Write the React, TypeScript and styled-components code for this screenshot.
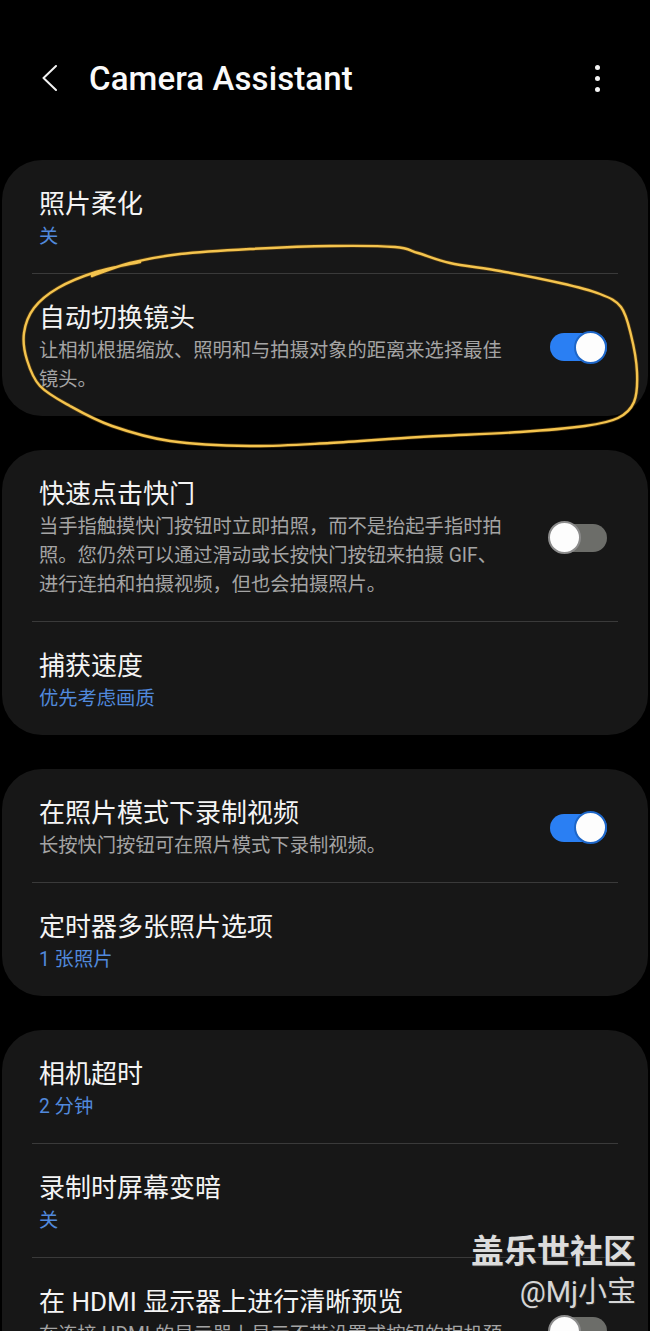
import React from "react";
import styled, { createGlobalStyle } from "styled-components";

const Global = createGlobalStyle`
  html, body { margin: 0; padding: 0; background: #000; }
  body { width: 650px; height: 1331px; overflow: hidden; }
  * { box-sizing: border-box; }
`;

const Page = styled.div`
  position: relative;
  width: 650px;
  height: 1331px;
  overflow: hidden;
  background: #000;
  font-family: Roboto, "Noto Sans CJK SC", sans-serif;
  color: #f2f2f2;
`;

const Header = styled.header`
  display: flex;
  align-items: center;
  height: 56px;
  margin: 50px 0 54px;
  padding: 0 50px 0 42px;
`;

const Back = styled.svg`
  flex: none;
  width: 15px;
  height: 26px;
`;

const Title = styled.h1`
  margin: 0 0 0 32px;
  font-family: Roboto, sans-serif;
  font-weight: 500;
  font-size: 33px;
  letter-spacing: 0.1px;
  color: #fafafa;
`;

const Kebab = styled.div`
  margin-left: auto;
  display: flex;
  flex-direction: column;
  gap: 6px;
`;

const Dot = styled.span`
  width: 5px;
  height: 5px;
  border-radius: 50%;
  background: #f5f5f5;
`;

const List = styled.main`
  display: flex;
  flex-direction: column;
  gap: 34px;
  padding: 0 2px;
`;

const Card = styled.section`
  background: #171717;
  border-radius: 40px;
  overflow: hidden;
`;

const Divider = styled.div`
  height: 1px;
  margin: 0 30px;
  background: #3a3a3a;
`;

const Row = styled.div`
  display: flex;
  align-items: center;
  padding: 26px 41px 22px 37px;
`;

const Texts = styled.div`
  flex: 1;
  max-width: 472px;
  min-width: 0;
`;

const RowTitle = styled.div`
  font-size: 26px;
  line-height: 36px;
  font-weight: 400;
  color: #f4f4f4;
`;

const Desc = styled.div`
  font-size: 19.3px;
  line-height: 29px;
  color: #a4a4a4;
`;

const Value = styled.div`
  font-size: 19.3px;
  line-height: 29px;
  color: #5189dc;
`;

const Track = styled.span<{ $on: boolean }>`
  position: relative;
  flex: none;
  margin-left: auto;
  width: 57px;
  height: 28px;
  border-radius: 14px;
  background: ${(p) => (p.$on ? "#2a7ff3" : "#6c6d69")};
`;

const Thumb = styled.span<{ $on: boolean }>`
  position: absolute;
  top: -2.5px;
  ${(p) => (p.$on ? "right: 0;" : "left: -2px;")}
  width: 33px;
  height: 33px;
  border-radius: 50%;
  background: #fdfdfd;
  border: 2px solid ${(p) => (p.$on ? "#1d66c8" : "#8c8c8c")};
`;

const Overlay = styled.svg`
  position: absolute;
  left: 0;
  top: 0;
  width: 650px;
  height: 1331px;
  pointer-events: none;
`;

const Watermark = styled.div`
  position: absolute;
  right: 14px;
  top: 1226px;
  display: flex;
  flex-direction: column;
  align-items: flex-end;
  font-family: "Noto Sans CJK SC", sans-serif;
  color: #dcdcdc;
  text-shadow: 0 0 2px #222, 1px 1px 1px #333;
  pointer-events: none;
`;

const WmBig = styled.div`
  font-size: 33px;
  font-weight: 700;
  line-height: 46px;
  letter-spacing: 0px;
`;

const WmSmall = styled.div`
  font-family: Roboto, "Noto Sans CJK SC", sans-serif;
  font-size: 29px;
  line-height: 40px;
  font-weight: 400;
  color: #d6d6d6;
`;

type Item = {
  title: string;
  desc?: string;
  value?: string;
  toggle?: boolean;
};

const cards: Item[][] = [
  [
    { title: "照片柔化", value: "关" },
    {
      title: "自动切换镜头",
      desc: "让相机根据缩放、照明和与拍摄对象的距离来选择最佳镜头。",
      toggle: true,
    },
  ],
  [
    {
      title: "快速点击快门",
      desc: "当手指触摸快门按钮时立即拍照，而不是抬起手指时拍照。您仍然可以通过滑动或长按快门按钮来拍摄 GIF、进行连拍和拍摄视频，但也会拍摄照片。",
      toggle: false,
    },
    { title: "捕获速度", value: "优先考虑画质" },
  ],
  [
    {
      title: "在照片模式下录制视频",
      desc: "长按快门按钮可在照片模式下录制视频。",
      toggle: true,
    },
    { title: "定时器多张照片选项", value: "1 张照片" },
  ],
  [
    { title: "相机超时", value: "2 分钟" },
    { title: "录制时屏幕变暗", value: "关" },
    {
      title: "在 HDMI 显示器上进行清晰预览",
      desc: "在连接 HDMI 的显示器上显示不带设置或按钮的相机预览。",
      toggle: false,
    },
  ],
];

const loopPts: [number, number][] = [
  [92, 276], [130, 263], [180, 254], [250, 249], [330, 246], [395, 247],
  [418, 253], [450, 263], [500, 271], [560, 283], [600, 294], [621, 307],
  [631, 335], [637, 372], [634, 402], [618, 418], [585, 426], [520, 432],
  [420, 437], [330, 443], [250, 446], [170, 441], [112, 426], [70, 406],
  [40, 386], [27, 360], [24, 333], [34, 308], [58, 288], [96, 272], [140, 262],
];

function catmull(pts: [number, number][]): string {
  let d = `M${pts[0][0]},${pts[0][1]}`;
  for (let i = 0; i < pts.length - 1; i++) {
    const p0 = pts[i - 1] || pts[i];
    const p1 = pts[i];
    const p2 = pts[i + 1];
    const p3 = pts[i + 2] || p2;
    const c1x = p1[0] + (p2[0] - p0[0]) / 6;
    const c1y = p1[1] + (p2[1] - p0[1]) / 6;
    const c2x = p2[0] - (p3[0] - p1[0]) / 6;
    const c2y = p2[1] - (p3[1] - p1[1]) / 6;
    d += ` C${c1x.toFixed(1)},${c1y.toFixed(1)} ${c2x.toFixed(1)},${c2y.toFixed(1)} ${p2[0]},${p2[1]}`;
  }
  return d;
}

function Toggle({ on }: { on: boolean }) {
  return (
    <Track $on={on}>
      <Thumb $on={on} />
    </Track>
  );
}

export default function App() {
  const loop = catmull(loopPts);
  return (
    <Page>
      <Global />
      <Header>
        <Back viewBox="0 0 15 26">
          <polyline
            points="14,1 1.5,13 14,25"
            fill="none"
            stroke="#f2f2f2"
            strokeWidth="2"
            strokeLinecap="round"
            strokeLinejoin="round"
          />
        </Back>
        <Title>Camera Assistant</Title>
        <Kebab>
          <Dot />
          <Dot />
          <Dot />
        </Kebab>
      </Header>
      <List>
        {cards.map((items, ci) => (
          <Card key={ci}>
            {items.map((it, i) => (
              <React.Fragment key={i}>
                {i > 0 && <Divider />}
                <Row>
                  <Texts>
                    <RowTitle>{it.title}</RowTitle>
                    {it.desc && <Desc>{it.desc}</Desc>}
                    {it.value && <Value>{it.value}</Value>}
                  </Texts>
                  {it.toggle !== undefined && <Toggle on={it.toggle} />}
                </Row>
              </React.Fragment>
            ))}
          </Card>
        ))}
      </List>
      <Overlay viewBox="0 0 650 1331">
        <path d={loop} fill="none" stroke="#6b4a10" strokeWidth="4" strokeLinecap="round" strokeLinejoin="round" opacity="0.6" />
        <path d={loop} fill="none" stroke="#f4c44e" strokeWidth="2.4" strokeLinecap="round" strokeLinejoin="round" />
      </Overlay>
      <Watermark>
        <WmBig>盖乐世社区</WmBig>
        <WmSmall>@Mj小宝</WmSmall>
      </Watermark>
    </Page>
  );
}
